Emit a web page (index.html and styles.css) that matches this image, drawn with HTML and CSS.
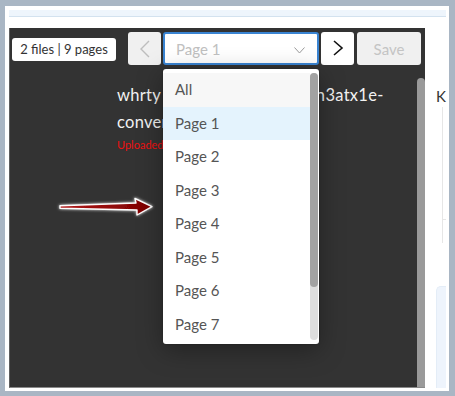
FILE: index.html
```html
<!DOCTYPE html>
<html>
<head>
<meta charset="utf-8">
<link rel="stylesheet" href="styles.css">
</head>
<body>
<div class="panel">
  <div class="strip"></div>
  <div class="main">
    <div class="viewer">
      <div class="toolbar">
        <span class="badge">2 files | 9 pages</span>
        <button class="btn nav prev" disabled>
          <svg width="12" height="18" viewBox="0 0 12 18"><polyline points="10,1 2,9 10,17" fill="none" stroke="#bdbdbd" stroke-width="1.4"/></svg>
        </button>
        <div class="select-wrap">
          <div class="select">
            <span class="select-value">Page 1</span>
            <svg class="caret" width="11" height="7" viewBox="0 0 11 7"><polyline points="0.5,0.5 5.5,6 10.5,0.5" fill="none" stroke="#9a9a9a" stroke-width="1"/></svg>
          </div>
          <div class="dropdown">
            <ul class="options">
              <li class="opt hover">All</li>
              <li class="opt active">Page 1</li>
              <li class="opt">Page 2</li>
              <li class="opt">Page 3</li>
              <li class="opt">Page 4</li>
              <li class="opt">Page 5</li>
              <li class="opt">Page 6</li>
              <li class="opt">Page 7</li>
            </ul>
            <div class="dd-scroll"><div class="dd-thumb"></div></div>
          </div>
        </div>
        <button class="btn nav next">
          <svg width="12" height="18" viewBox="0 0 12 18"><polyline points="2,1 10,8 2,15" fill="none" stroke="#111" stroke-width="1.6"/></svg>
        </button>
        <button class="btn save" disabled>Save</button>
      </div>
      <div class="body">
        <div class="content">
          <div class="filename">whrty a8x2kdm4vbeul7ipzn3atx1e-converted_document.pdf</div>
          <div class="uploaded">Uploaded by user on 12/04/2023</div>
        </div>
        <div class="vscroll"></div>
      </div>
      <svg class="arrow" width="110" height="32" viewBox="0 0 110 32">
        <defs>
          <linearGradient id="ag" x1="0" y1="0" x2="1" y2="0">
            <stop offset="0" stop-color="#b01818"/>
            <stop offset="1" stop-color="#7c0000"/>
          </linearGradient>
          <filter id="glow" x="-20%" y="-60%" width="140%" height="220%">
            <feGaussianBlur in="SourceAlpha" stdDeviation="1.5" result="b"/>
            <feFlood flood-color="#ffffff" flood-opacity="0.9"/>
            <feComposite in2="b" operator="in" result="g"/>
            <feMerge><feMergeNode in="g"/><feMergeNode in="SourceGraphic"/></feMerge>
          </filter>
        </defs>
        <path d="M10,15.8 L86,13 L85,8.5 L102,16.7 L87,25 L87,20 L10,18.3 Z" fill="url(#ag)" stroke="#fff" stroke-width="1.4" stroke-linejoin="round" filter="url(#glow)"/>
      </svg>
    </div>
    <div class="side">
      <div class="side-title">K</div>
      <div class="side-box"><div class="side-rule"></div></div>
      <div class="side-card"></div>
    </div>
  </div>
</div>
</body>
</html>
```

FILE: styles.css
```css
* { box-sizing: border-box; }
html, body {
  margin: 0;
  padding: 0;
  width: 455px;
  height: 396px;
  overflow: hidden;
  background: #a9b6c4;
  font-family: Lato, "Open Sans", sans-serif;
}
.panel {
  margin: 6px 0 0 5px;
  width: 444px;
  height: 385px;
  background: #fff;
  padding: 4px 3px 3px 4px;
  display: flex;
  flex-direction: column;
}
.strip {
  height: 7px;
  background: #eef5fc;
  border-bottom: 1px solid #d3e2ef;
  flex: none;
}
.main {
  margin-top: 11px;
  flex: 1;
  display: flex;
  min-height: 0;
}
.viewer {
  position: relative;
  width: 416px;
  flex: none;
  background: #333;
  border-left: 1px solid #5e5e5e;
  border-bottom: 1px solid #8a8a8a;
  display: flex;
  flex-direction: column;
}
.toolbar {
  display: flex;
  align-items: center;
  padding: 4px 0 0 2px;
  height: 37px;
  flex: none;
  position: relative;
  z-index: 2;
}
.badge {
  background: #fff;
  border-radius: 3px;
  color: #333;
  font-size: 13px;
  width: 104px;
  text-align: center;
  height: 23px;
  line-height: 23px;
  margin-right: 12px;
  margin-top: 2px;
  white-space: nowrap;
}
.btn {
  height: 33px;
  border: none;
  border-radius: 3px;
  padding: 0;
  font-family: inherit;
  display: flex;
  align-items: center;
  justify-content: center;
}
.nav { width: 33px; }
.prev { background: #f0f0f0; }
.next { background: #fff; margin-left: 2px; }
.save {
  width: 64px;
  margin-left: 3px;
  background: #f0f0f0;
  color: #c4c4c4;
  font-size: 15px;
}
.select-wrap {
  position: relative;
  width: 156px;
  margin-left: 2px;
}
.select {
  height: 33px;
  border: 2px solid #3a84d2;
  border-radius: 3px;
  background: #fff;
  display: flex;
  align-items: center;
  padding: 0 12px 0 11px;
}
.select-value {
  flex: 1;
  color: #c0c0c0;
  font-size: 15px;
}
.caret { margin-top: 3px; }
.dropdown {
  position: absolute;
  top: 37px;
  left: 0;
  width: 156px;
  height: 275px;
  background: #fff;
  border-radius: 3px;
  box-shadow: 0 6px 26px rgba(0,0,0,0.35), 0 0 2px rgba(0,0,0,0.3);
  display: flex;
  padding: 4px 1px 4px 0;
}
.options {
  list-style: none;
  margin: 0;
  padding: 0;
  flex: 1;
}
.opt {
  height: 33.5px;
  line-height: 33.5px;
  padding-left: 12px;
  color: #555;
  font-size: 15px;
}
.opt.hover { background: #f7f7f7; }
.opt.active { background: #e4f3fd; }
.dd-scroll {
  width: 8px;
  background: #dedede;
  border-radius: 4px;
}
.dd-thumb {
  height: 214px;
  background: #a2a2a2;
  border-radius: 4px;
}
.body {
  flex: 1;
  display: flex;
  min-height: 0;
}
.content {
  flex: 1;
  padding: 17px 0 0 107px;
}
.filename {
  width: 280px;
  color: #f2f2f2;
  font-size: 16.5px;
  letter-spacing: 0.3px;
  line-height: 27px;
}
.uploaded {
  color: #ee1111;
  font-size: 11px;
  line-height: 14px;
  margin-top: 2px;
  white-space: nowrap;
  overflow: hidden;
}
.vscroll {
  width: 8px;
  margin-top: 13px;
  background: #9a9a9a;
  border-radius: 4px 4px 0 0;
}
.arrow {
  position: absolute;
  left: 40px;
  top: 162px;
  z-index: 1;
}
.side {
  flex: 1;
  display: flex;
  flex-direction: column;
  padding: 58px 0 0 11px;
}
.side-title {
  font-size: 15px;
  line-height: 20px;
  color: #333;
}
.side-box {
  margin: 1px 0 0 6px;
  height: 136px;
  border-left: 1px solid #e6e6e6;
}
.side-rule {
  margin-top: 112px;
  border-top: 1px solid #e6e6e6;
}
.side-card {
  margin-top: 43px;
  flex: 1;
  background: #eef4fc;
  border-top-left-radius: 5px;
  border-left: 1px solid #e4edf7;
  border-top: 1px solid #e4edf7;
}
```
